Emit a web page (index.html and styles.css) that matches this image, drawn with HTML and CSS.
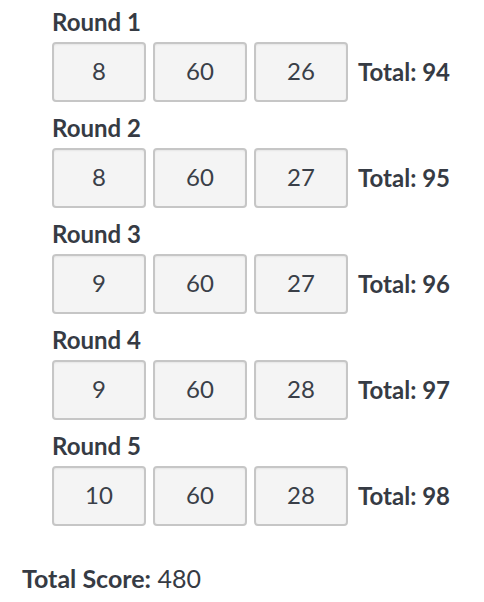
FILE: index.html
```html
<!DOCTYPE html>
<html>
<head>
<meta charset="utf-8">
<link rel="stylesheet" href="styles.css">
</head>
<body>
<div class="page">
  <div class="rounds">
    <div class="round">
      <div class="label">Round 1</div>
      <div class="row">
        <div class="box">8</div><div class="box">60</div><div class="box">26</div>
        <div class="total">Total: 94</div>
      </div>
    </div>
    <div class="round">
      <div class="label">Round 2</div>
      <div class="row">
        <div class="box">8</div><div class="box">60</div><div class="box">27</div>
        <div class="total">Total: 95</div>
      </div>
    </div>
    <div class="round">
      <div class="label">Round 3</div>
      <div class="row">
        <div class="box">9</div><div class="box">60</div><div class="box">27</div>
        <div class="total">Total: 96</div>
      </div>
    </div>
    <div class="round">
      <div class="label">Round 4</div>
      <div class="row">
        <div class="box">9</div><div class="box">60</div><div class="box">28</div>
        <div class="total">Total: 97</div>
      </div>
    </div>
    <div class="round">
      <div class="label">Round 5</div>
      <div class="row">
        <div class="box">10</div><div class="box">60</div><div class="box">28</div>
        <div class="total">Total: 98</div>
      </div>
    </div>
  </div>
  <div class="score"><b>Total Score:</b> 480</div>
</div>
</body>
</html>
```

FILE: styles.css
```css
html, body {
  margin: 0;
  padding: 0;
  background: #ffffff;
}
body {
  font-family: Lato, "Noto Sans", sans-serif;
  color: #363b44;
}
.page {
  padding: 7px 0 0 0;
}
.rounds {
  padding-left: 52px;
  display: flex;
  flex-direction: column;
  gap: 11px;
}
.round {
  display: flex;
  flex-direction: column;
  gap: 5px;
}
.label {
  font-weight: 700;
  font-size: 24px;
  line-height: 30px;
}
.row {
  display: flex;
  align-items: center;
  gap: 7px;
}
.box {
  box-sizing: border-box;
  width: 94px;
  height: 60px;
  padding-bottom: 3px;
  border: 2px solid #c6c6c6;
  border-radius: 4px;
  background: #f4f4f4;
  box-shadow: inset 0 1px 2px rgba(0,0,0,0.06);
  display: flex;
  align-items: center;
  justify-content: center;
  font-size: 24px;
  color: #3a3f48;
}
.total {
  margin-left: 3px;
  padding-bottom: 2px;
  font-weight: 700;
  font-size: 24px;
}
.score {
  margin-top: 37px;
  padding-left: 22px;
  font-size: 25px;
  line-height: 30px;
}
.score b {
  font-weight: 700;
}
```
